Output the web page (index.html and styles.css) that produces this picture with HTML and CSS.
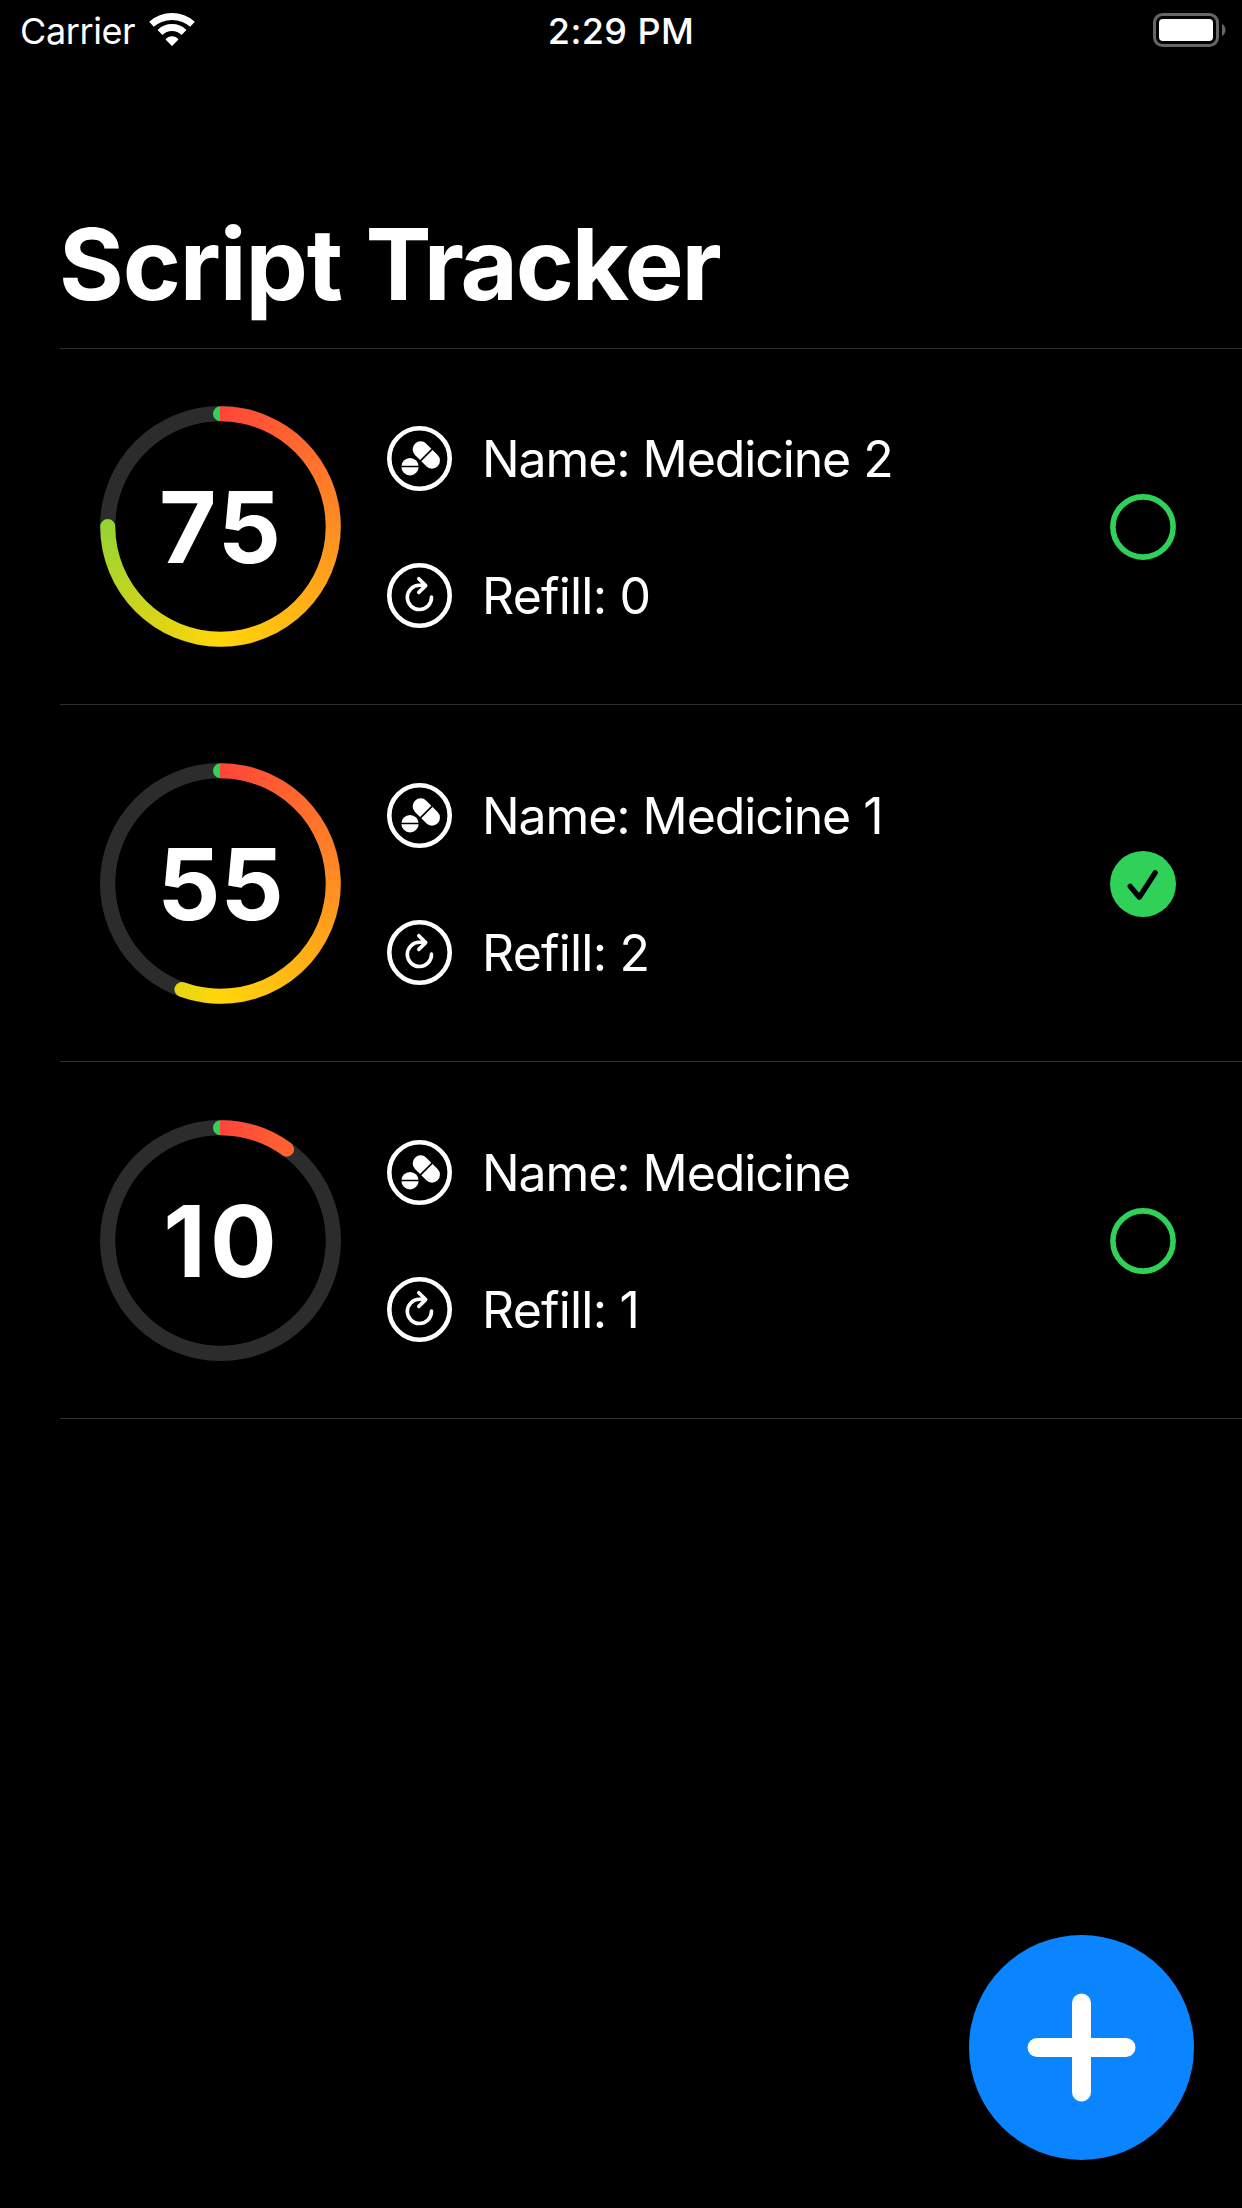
FILE: index.html
```html
<!DOCTYPE html>
<html lang="en">
<head>
<meta charset="utf-8">
<title>Script Tracker</title>
<link rel="stylesheet" href="styles.css">
</head>
<body>
<svg class="sprite" aria-hidden="true">
  <symbol id="pills" viewBox="0 0 65 65">
    <circle cx="32.5" cy="32.5" r="30.2" fill="none" stroke="#fff" stroke-width="4.6"/>
    <circle cx="23" cy="40.7" r="8.7" fill="#fff"/>
    <path d="M13 40.5H33" stroke="#000" stroke-width="1.5"/>
    <g transform="rotate(45 39.3 29)">
      <rect x="23.3" y="21" width="32" height="16" rx="8" fill="#fff"/>
      <path d="M39.3 20V38" stroke="#000" stroke-width="1.7"/>
    </g>
  </symbol>
  <symbol id="refill" viewBox="0 0 65 65">
    <circle cx="32.5" cy="32.5" r="30.2" fill="none" stroke="#fff" stroke-width="4.6"/>
    <path d="M44.5 34A12.1 12.1 0 1 1 32.4 22.3H38M31.8 15.7L38.7 22.6L31.8 29.4" fill="none" stroke="#fff" stroke-width="3.6" stroke-linecap="round" stroke-linejoin="round"/>
  </symbol>
  <symbol id="open" viewBox="0 0 66 66">
    <circle cx="33" cy="33" r="30.1" fill="none" stroke="#30d158" stroke-width="5.6"/>
  </symbol>
  <symbol id="done" viewBox="0 0 66 66">
    <circle cx="33" cy="33" r="33" fill="#30d158"/>
    <path d="M20.2 35.4L29.3 46.2L45.2 21.7" fill="none" stroke="#000" stroke-width="5.3" stroke-linecap="round" stroke-linejoin="round"/>
  </symbol>
</svg>
<div class="screen">
  <header class="status">
    <div class="status-left">
      <span class="carrier">Carrier</span>
      <svg class="wifi" viewBox="0 0 46 33" fill="none" stroke="#fff">
        <path d="M2.5 11.3A30.8 30.8 0 0 1 43.5 11.3" stroke-width="6.9"/>
        <path d="M11 19.5A17.1 17.1 0 0 1 35 19.5" stroke-width="7"/>
        <path d="M16.6 26.4A7.9 7.9 0 0 1 29.4 26.4L23.6 32.6Q23 33.2 22.4 32.6Z" fill="#fff" stroke="none"/>
      </svg>
    </div>
    <span class="time">2:29 PM</span>
    <div class="status-right">
      <svg class="battery" viewBox="0 0 73 34">
        <rect x="1.5" y="1.5" width="63" height="31" rx="8" fill="none" stroke="#666" stroke-width="3"/>
        <rect x="6" y="6" width="54" height="22" rx="4" fill="#fff"/>
        <path d="M69 11C73.7 13 73.7 21 69 23Z" fill="#666"/>
      </svg>
    </div>
  </header>
  <h1 class="title"><span class="word-a">Script</span> <span class="word-b">Tracker</span></h1>
  <ul class="list">
    <li class="row">
      <div class="ring"><div class="arc arc-75"></div><span class="count n75">75</span></div>
      <div class="details">
        <div class="line"><svg class="icon"><use href="#pills"/></svg><span class="label">Name: Medicine 2</span></div>
        <div class="line"><svg class="icon"><use href="#refill"/></svg><span class="label refill">Refill: 0</span></div>
      </div>
      <svg class="check"><use href="#open"/></svg>
    </li>
    <li class="row">
      <div class="ring"><div class="arc arc-55"></div><span class="count n55">55</span></div>
      <div class="details">
        <div class="line"><svg class="icon"><use href="#pills"/></svg><span class="label">Name: Medicine 1</span></div>
        <div class="line"><svg class="icon"><use href="#refill"/></svg><span class="label refill">Refill: 2</span></div>
      </div>
      <svg class="check"><use href="#done"/></svg>
    </li>
    <li class="row">
      <div class="ring"><div class="arc arc-10"></div><span class="count n10">10</span></div>
      <div class="details">
        <div class="line"><svg class="icon"><use href="#pills"/></svg><span class="label">Name: Medicine</span></div>
        <div class="line"><svg class="icon"><use href="#refill"/></svg><span class="label refill">Refill: 1</span></div>
      </div>
      <svg class="check"><use href="#open"/></svg>
    </li>
  </ul>
  <button class="add" aria-label="Add">
    <svg viewBox="0 0 225 225"><path d="M112.5 68V157M68 112.5H157" stroke="#fff" stroke-width="19" stroke-linecap="round"/></svg>
  </button>
</div>
</body>
</html>
```
FILE: styles.css
```css
* { box-sizing: border-box; }
body {
  margin: 0;
  background: #000;
  color: #fff;
  font-family: Inter, "Liberation Sans", sans-serif;
}
.sprite { display: none; }
.screen {
  position: relative;
  width: 1242px;
  height: 2208px;
  overflow: hidden;
  background: #000;
}
svg { display: block; flex: none; }
.status {
  display: grid;
  grid-template-columns: 1fr auto 1fr;
  height: 60px;
  padding: 0 16px;
  font-size: 36px;
  line-height: 62px;
}
.status-left { display: flex; padding-left: 4px; }
.carrier { width: 129px; letter-spacing: -0.4px; white-space: nowrap; }
.wifi { width: 46px; height: 33px; margin-top: 13px; }
.time { font-weight: 500; letter-spacing: 0.4px; }
.status-right { display: flex; justify-content: flex-end; }
.battery { width: 73px; height: 34px; margin-top: 13px; }
.title {
  margin: 0;
  padding: 144px 0 0 59px;
  height: 288px;
  font-size: 99px;
  line-height: 120px;
  font-weight: 700;
  white-space: nowrap;
}
.word-a { letter-spacing: -1.1px; }
.word-b { letter-spacing: -2.2px; }
.list {
  list-style: none;
  margin: 0 0 0 60px;
  padding: 0;
  border-top: 1px solid #303032;
}
.row {
  display: flex;
  align-items: flex-start;
  height: 357px;
  padding: 58px 66px 0 40px;
  border-bottom: 1px solid #303032;
}
.row:first-child { height: 356px; padding-top: 57px; }
.ring {
  display: grid;
  place-items: center;
  width: 241px;
  height: 241px;
  margin-right: 46px;
  border-radius: 50%;
  background: radial-gradient(circle, transparent 104.8px, #2c2c2c 105.6px);
}
.arc, .count { grid-area: 1 / 1; }
.arc {
  width: 241px;
  height: 241px;
  background: conic-gradient(#ff453a, #ffd60a, #30d158);
}
.arc-75 { clip-path: path("M120.5 .25A120.25 120.25 0 1 1 .25 120.5A7.5 7.5 0 0 1 15.25 120.5A105.25 105.25 0 1 0 120.5 15.25A7.5 7.5 0 0 1 120.5 .25Z"); }
.arc-55 { clip-path: path("M120.5 .25A120.25 120.25 0 1 1 79.37 233.5A7.5 7.5 0 0 1 84.5 219.4A105.25 105.25 0 1 0 120.5 15.25A7.5 7.5 0 0 1 120.5 .25Z"); }
.arc-10 { clip-path: path("M120.5 .25A120.25 120.25 0 0 1 191.18 23.22A7.5 7.5 0 0 1 182.37 35.35A105.25 105.25 0 0 0 120.5 15.25A7.5 7.5 0 0 1 120.5 .25Z"); }
.count { font-size: 99px; font-weight: 750; line-height: 120px; }
.n75 { letter-spacing: 2px; padding-left: 1px; }
.n55 { letter-spacing: 0; }
.n10 { letter-spacing: 4px; padding-left: 3px; }
.details {
  display: flex;
  flex-direction: column;
  gap: 72px;
  flex: 1;
  margin-top: 20px;
}
.line { display: flex; align-items: flex-start; height: 65px; }
.icon { width: 65px; height: 65px; }
.label {
  margin-left: 30px;
  font-size: 50px;
  line-height: 67px;
  letter-spacing: -1.1px;
  white-space: nowrap;
}
.label.refill { letter-spacing: -0.8px; }
.check { width: 66px; height: 66px; margin-top: 88px; }
.add {
  position: absolute;
  right: 48px;
  bottom: 48px;
  width: 225px;
  height: 225px;
  padding: 0;
  border: 0;
  border-radius: 50%;
  background: #0a84ff;
}
```
